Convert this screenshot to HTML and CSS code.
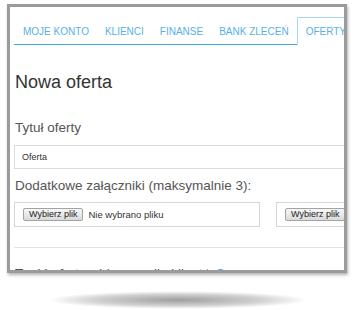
FILE: index.html
```html
<!DOCTYPE html>
<html lang="pl">
<head>
    <meta charset="UTF-8">
    <meta name="viewport" content="width=device-width, initial-scale=1.0">
    <title>Nowa oferta</title>
    <link rel="stylesheet" href="styles.css">
</head>
<body>
    <div class="stage">
        <div class="frame">
            <div class="page">
                <ul class="tabs">
                    <li class="tab">MOJE KONTO</li>
                    <li class="tab">KLIENCI</li>
                    <li class="tab">FINANSE</li>
                    <li class="tab">BANK ZLECEŃ</li>
                    <li class="tab active">OFERTY</li>
                </ul>

                <h1 class="title">Nowa oferta</h1>

                <div class="label first">Tytuł oferty</div>
                <div class="input">Oferta</div>

                <div class="label">Dodatkowe załączniki (maksymalnie 3):</div>
                <div class="files">
                    <div class="file"><span class="file-btn">Wybierz plik</span><span class="file-name">Nie wybrano pliku</span></div>
                    <div class="file"><span class="file-btn">Wybierz plik</span><span class="file-name">Nie wybrano pliku</span></div>
                    <div class="file"><span class="file-btn">Wybierz plik</span><span class="file-name">Nie wybrano pliku</span></div>
                </div>

                <div class="rule"></div>

                <div class="label next">Treść oferty widoczna dla klient<span class="req">*</span><span class="info">i</span></div>
            </div>
        </div>
        <div class="floor"></div>
    </div>
</body>
</html>
```

FILE: styles.css
```css
body {
    margin: 0;
    background: #fff;
    font-family: "Liberation Sans", Arial, sans-serif;
}
.stage {
    padding: 4px 0 0 7px;
}
.frame {
    width: 340px;
    height: 269px;
    box-sizing: border-box;
    border: 3px solid #9b9b9b;
    overflow: hidden;
    background: #fff;
    box-shadow: 1px 2px 3px rgba(0, 0, 0, 0.3);
}
.page {
    width: 780px;
    padding: 10px 0 0 4px;
}
.tabs {
    display: flex;
    margin: 0;
    padding: 0 0 0 1px;
    list-style: none;
    border-bottom: 1px solid #3ea7dd;
}
.tab {
    padding: 9px 8px 7px;
    font-size: 10px;
    line-height: 11px;
    color: #56b2e6;
    white-space: nowrap;
}
.tab.active {
    padding: 8px 8px 8px;
    border: 1px solid #a5d8f2;
    border-bottom: none;
    background: #fff;
    margin-bottom: -1px;
}
.title {
    margin: 27px 0 0 1px;
    font-size: 18px;
    line-height: 20px;
    font-weight: normal;
    color: #333;
}
.label {
    margin: 9px 0 0 1px;
    font-size: 13.5px;
    line-height: 16px;
    color: #555;
}
.label.first {
    margin-top: 28px;
}
.label.next {
    margin-top: 18px;
    display: flex;
    align-items: center;
}
.input {
    margin-top: 9px;
    height: 24px;
    box-sizing: border-box;
    border: 1px solid #dcdcdc;
    padding-left: 7px;
    font-size: 9px;
    line-height: 22px;
    color: #333;
}
.files {
    display: flex;
    gap: 16px;
    margin-top: 8px;
}
.file {
    width: 246px;
    height: 25px;
    box-sizing: border-box;
    border: 1px solid #d6d6d6;
    padding: 0 8px;
    display: flex;
    align-items: center;
    gap: 5px;
    font-size: 9.5px;
    color: #333;
}
.file-btn {
    height: 13px;
    box-sizing: border-box;
    padding: 0 5px;
    border: 1px solid #a3a3a3;
    border-radius: 2px;
    background: linear-gradient(#f8f8f8, #dadada);
    font-size: 9px;
    line-height: 11px;
    color: #222;
    white-space: nowrap;
}
.file-name {
    white-space: nowrap;
}
.rule {
    margin-top: 20px;
    border-top: 1px solid #e2e2e2;
}
.req {
    color: #d9534f;
    margin-left: 2px;
}
.info {
    display: inline-block;
    width: 11px;
    height: 11px;
    margin-left: 5px;
    border-radius: 50%;
    background: #3ea7dd;
    color: #fff;
    font-size: 8px;
    line-height: 11px;
    text-align: center;
}
.floor {
    width: 262px;
    height: 18px;
    margin: 18px 0 0 40px;
    border-radius: 50%;
    background: radial-gradient(ellipse at center, rgba(0, 0, 0, 0.38) 0%, rgba(0, 0, 0, 0.18) 45%, rgba(0, 0, 0, 0) 70%);
}
```
